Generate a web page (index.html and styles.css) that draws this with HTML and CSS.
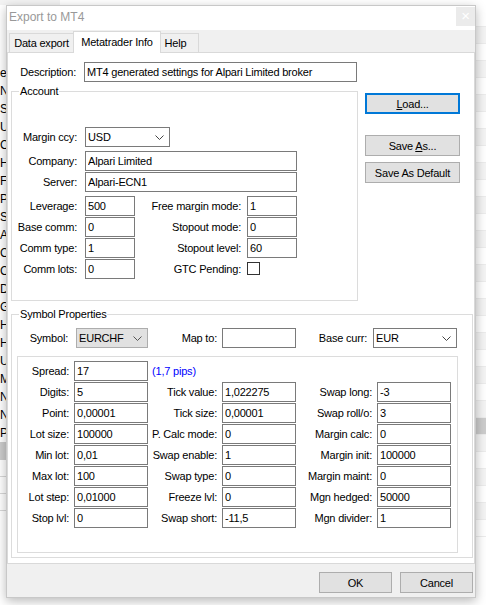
FILE: index.html
```html
<!DOCTYPE html>
<html>
<head>
    <title>Export to MT4</title>
    <link rel="stylesheet" href="styles.css">
</head>
<body>
<div class="desktop">
    <!-- windows behind the dialog -->
    <div class="back-list">
        <div>e</div><div>N</div><div>S</div><div>U</div><div>C</div><div>H</div><div>F</div>
        <div>P</div><div>S</div><div>A</div><div>C</div><div>C</div><div>D</div><div>G</div>
        <div>H</div><div>H</div><div>U</div><div>M</div><div>N</div><div>N</div><div>P</div>
        <div class="sel"></div>
        <div class="line"></div><div class="line"></div><div class="line"></div>
    </div>
    <div class="back-grid">
        <div></div><div></div><div></div><div></div><div></div><div></div><div></div><div></div>
        <div></div><div></div><div></div><div></div><div></div><div></div><div></div><div></div>
        <div></div><div></div><div></div><div></div><div></div><div></div><div></div><div></div>
        <div class="sel"></div><div></div><div></div><div></div><div></div><div></div><div></div>
    </div>

    <div class="dialog">
        <div class="titlebar">
            <span class="title">Export to MT4</span>
            <span class="close">&times;</span>
        </div>

        <div class="tabs">
            <div class="tab tab-data">Data export</div>
            <div class="tab tab-info active">Metatrader Info</div>
            <div class="tab tab-help">Help</div>
        </div>

        <div class="panel">
            <div class="desc-row">
                <label class="lbl">Description:</label>
                <input type="text" class="desc" value="MT4 generated settings for Alpari Limited broker">
            </div>

            <div class="account-row">
                <fieldset class="group account">
                    <legend>Account</legend>
                    <div class="acc-grid">
                        <label class="lbl">Margin ccy:</label>
                        <div class="combo ccy"><span>USD</span>
                            <svg width="9" height="5" viewBox="0 0 9 5"><path d="M0.5 0.5 L4.5 4.5 L8.5 0.5" fill="none" stroke="#444" stroke-width="1"/></svg>
                        </div>
                        <div></div>

                        <label class="lbl">Company:</label>
                        <input type="text" class="wide" value="Alpari Limited">

                        <label class="lbl">Server:</label>
                        <input type="text" class="wide" value="Alpari-ECN1">

                        <label class="lbl">Leverage:</label>
                        <input type="text" value="500">
                        <label class="lbl mid">Free margin mode:</label>
                        <input type="text" value="1">

                        <label class="lbl">Base comm:</label>
                        <input type="text" value="0">
                        <label class="lbl mid">Stopout mode:</label>
                        <input type="text" value="0">

                        <label class="lbl">Comm type:</label>
                        <input type="text" value="1">
                        <label class="lbl mid">Stopout level:</label>
                        <input type="text" value="60">

                        <label class="lbl">Comm lots:</label>
                        <input type="text" value="0">
                        <label class="lbl mid">GTC Pending:</label>
                        <div><span class="check"></span></div>
                    </div>
                </fieldset>

                <div class="side-buttons">
                    <button class="btn focused"><u>L</u>oad...</button>
                    <button class="btn save-as">Save <u>A</u>s...</button>
                    <button class="btn save-default">Save As Default</button>
                </div>
            </div>

            <fieldset class="group symbol">
                <legend>Symbol Properties</legend>
                <div class="sym-head">
                    <label class="lbl first">Symbol:</label>
                    <div class="combo gray"><span>EURCHF</span>
                        <svg width="9" height="5" viewBox="0 0 9 5"><path d="M0.5 0.5 L4.5 4.5 L8.5 0.5" fill="none" stroke="#555" stroke-width="1"/></svg>
                    </div>
                    <label class="lbl">Map to:</label>
                    <input type="text" value="">
                    <label class="lbl base">Base curr:</label>
                    <div class="combo"><span>EUR</span>
                        <svg width="9" height="5" viewBox="0 0 9 5"><path d="M0.5 0.5 L4.5 4.5 L8.5 0.5" fill="none" stroke="#444" stroke-width="1"/></svg>
                    </div>
                </div>

                <div class="sym-box">
                    <div class="sym-grid">
                        <label class="lbl">Spread:</label>
                        <input type="text" value="17">
                        <span class="pips">(1,7 pips)</span>
                        <div></div><div></div><div></div>

                        <label class="lbl">Digits:</label>
                        <input type="text" value="5">
                        <label class="lbl">Tick value:</label>
                        <input type="text" value="1,022275">
                        <label class="lbl">Swap long:</label>
                        <input type="text" value="-3">

                        <label class="lbl">Point:</label>
                        <input type="text" value="0,00001">
                        <label class="lbl">Tick size:</label>
                        <input type="text" value="0,00001">
                        <label class="lbl">Swap roll/o:</label>
                        <input type="text" value="3">

                        <label class="lbl">Lot size:</label>
                        <input type="text" value="100000">
                        <label class="lbl">P. Calc mode:</label>
                        <input type="text" value="0">
                        <label class="lbl">Margin calc:</label>
                        <input type="text" value="0">

                        <label class="lbl">Min lot:</label>
                        <input type="text" value="0,01">
                        <label class="lbl">Swap enable:</label>
                        <input type="text" value="1">
                        <label class="lbl">Margin init:</label>
                        <input type="text" value="100000">

                        <label class="lbl">Max lot:</label>
                        <input type="text" value="100">
                        <label class="lbl">Swap type:</label>
                        <input type="text" value="0">
                        <label class="lbl">Margin maint:</label>
                        <input type="text" value="0">

                        <label class="lbl">Lot step:</label>
                        <input type="text" value="0,01000">
                        <label class="lbl">Freeze lvl:</label>
                        <input type="text" value="0">
                        <label class="lbl">Mgn hedged:</label>
                        <input type="text" value="50000">

                        <label class="lbl">Stop lvl:</label>
                        <input type="text" value="0">
                        <label class="lbl">Swap short:</label>
                        <input type="text" value="-11,5">
                        <label class="lbl">Mgn divider:</label>
                        <input type="text" value="1">
                    </div>
                </div>
            </fieldset>
        </div>

        <div class="footer">
            <button class="btn">OK</button>
            <button class="btn">Cancel</button>
        </div>
    </div>
</div>
</body>
</html>
```

FILE: styles.css
```css
body {
    margin: 0;
    font-family: "Liberation Sans", Arial, sans-serif;
    font-size: 11px;
    color: #000;
    background-color: #fff;
}

.desktop {
    position: relative;
    width: 486px;
    height: 605px;
    overflow: hidden;
    display: flex;
}

/* background windows */
.back-list {
    width: 60px;
    padding-top: 59px;
    font-size: 12px;
    border-top: 5px solid #f3f3f3;
}

.back-list div {
    height: 18px;
    line-height: 18px;
}

.back-list .sel {
    background-color: #cccccc;
}

.back-list .line {
    border-bottom: 1px solid #d8d8d8;
    height: 16px;
}

.back-grid {
    flex: 1;
    padding-top: 10px;
}

.back-grid div {
    height: 16px;
    border-bottom: 1px solid #ececec;
}

.back-grid div:nth-child(even) {
    background-color: #f4f4f4;
}

.back-grid .sel {
    background-color: #cccccc;
}

/* dialog window */
.dialog {
    position: absolute;
    left: 6px;
    top: 5px;
    width: 470px;
    height: 593px;
    box-sizing: border-box;
    border: 1px solid #c8c8c8;
    background-color: #f0f0f0;
    box-shadow: 0 3px 10px rgba(0, 0, 0, 0.28);
    display: flex;
    flex-direction: column;
    letter-spacing: -0.2px;
}

.titlebar {
    height: 24px;
    flex: none;
    background-color: #fff;
    display: flex;
    justify-content: space-between;
    align-items: flex-start;
}

.title {
    font-size: 12px;
    line-height: 14px;
    color: #999;
    margin: 4px 0 0 2px;
    letter-spacing: 0;
}

.close {
    width: 19px;
    height: 19px;
    margin-top: 1px;
    background-color: #ebebeb;
    color: #fff;
    font-size: 15px;
    line-height: 18px;
    text-align: center;
}

.tabs {
    height: 22px;
    flex: none;
    display: flex;
    align-items: flex-end;
    padding-left: 2px;
}

.tab {
    box-sizing: border-box;
    height: 19px;
    line-height: 18px;
    border: 1px solid #d9d9d9;
    border-bottom: none;
    background-color: #f0f0f0;
    text-align: center;
}

.tab-data {
    width: 64px;
    border-right: none;
}

.tab-info {
    width: 88px;
}

.tab-help {
    width: 38px;
    border-left: none;
    padding-right: 8px;
}

.tab.active {
    position: relative;
    z-index: 1;
    height: 22px;
    line-height: 20px;
    margin-bottom: -1px;
    background-color: #fff;
}

.panel {
    height: 512px;
    flex: none;
    box-sizing: border-box;
    background-color: #fff;
    border: 1px solid #d9d9d9;
    padding: 9px 1px 0 3px;
}

.footer {
    flex: 1;
    display: flex;
    justify-content: flex-end;
    gap: 8px;
    padding: 8px 2px 0 0;
}

.footer .btn {
    width: 73px;
}

/* controls */
.lbl {
    display: block;
    text-align: right;
    line-height: 20px;
    white-space: nowrap;
}

input[type="text"] {
    box-sizing: border-box;
    width: 100%;
    height: 20px;
    margin: 0;
    padding: 0 2px;
    border: 1px solid #7a7a7a;
    border-radius: 0;
    background-color: #fff;
    font-family: inherit;
    font-size: 11px;
    letter-spacing: -0.2px;
    color: #000;
    outline: none;
}

.combo {
    box-sizing: border-box;
    height: 20px;
    border: 1px solid #7a7a7a;
    background-color: #fff;
    display: flex;
    align-items: center;
    justify-content: space-between;
    padding: 0 5px 0 2px;
}

.combo.gray {
    background-color: #e1e1e1;
    border-color: #adadad;
}

.btn {
    box-sizing: border-box;
    height: 21px;
    padding: 0;
    border: 1px solid #adadad;
    background-color: #e1e1e1;
    font-family: inherit;
    font-size: 11px;
    letter-spacing: -0.2px;
    color: #000;
}

.btn.focused {
    border: 2px solid #0078d7;
}

.check {
    display: block;
    width: 13px;
    height: 13px;
    box-sizing: border-box;
    border: 1px solid #333;
    margin-top: 3px;
}

.pips {
    color: #0000ff;
    line-height: 20px;
    padding-left: 4px;
    white-space: nowrap;
}

/* description */
.desc-row {
    display: grid;
    grid-template-columns: 73px 273px;
}

.desc-row .lbl {
    padding-right: 8px;
}

/* group boxes */
.group {
    margin: 0;
    padding: 0;
    min-width: 0;
    border: 1px solid #dcdcdc;
}

.group legend {
    padding: 0 1px;
    margin-left: 7px;
    line-height: 13px;
}

.account-row {
    display: flex;
    align-items: flex-start;
    margin-top: 3px;
}

.account {
    width: 347px;
    box-sizing: border-box;
    padding: 29px 0 20px 0;
}

.acc-grid {
    display: grid;
    grid-template-columns: 73px 50px 112px 50px;
    grid-template-rows: 24px 21px 24px 21px 21px 21px 21px;
    align-items: start;
}

.acc-grid .lbl {
    padding-right: 8px;
}

.acc-grid .lbl.mid {
    padding-right: 6px;
}

.acc-grid .combo.ccy {
    grid-column: 2 / 4;
    width: 85px;
}

.acc-grid .wide {
    grid-column: 2 / 5;
}

.side-buttons {
    width: 95px;
    margin-left: 7px;
    padding-top: 8px;
    display: flex;
    flex-direction: column;
}

.save-as {
    margin-top: 21px;
}

.save-default {
    margin-top: 6px;
}

.symbol {
    margin-top: 7px;
    padding: 7px 0 4px 0;
}

.sym-head {
    display: grid;
    grid-template-columns: 64px 72px 74px 74px 77px 84px;
}

.sym-head .lbl {
    padding-right: 5px;
}

.sym-head .lbl.first {
    padding-right: 8px;
}

.sym-head .lbl.base {
    padding-right: 6px;
}

.sym-box {
    margin: 8px 14px 0 5px;
    border: 1px solid #dcdcdc;
    padding: 4px 0 24px 0;
}

.sym-grid {
    display: grid;
    grid-template-columns: 56px 74px 74px 74px 81px 74px;
    grid-auto-rows: 20px;
    row-gap: 1px;
}

.sym-grid .lbl {
    padding-right: 5px;
}
```
